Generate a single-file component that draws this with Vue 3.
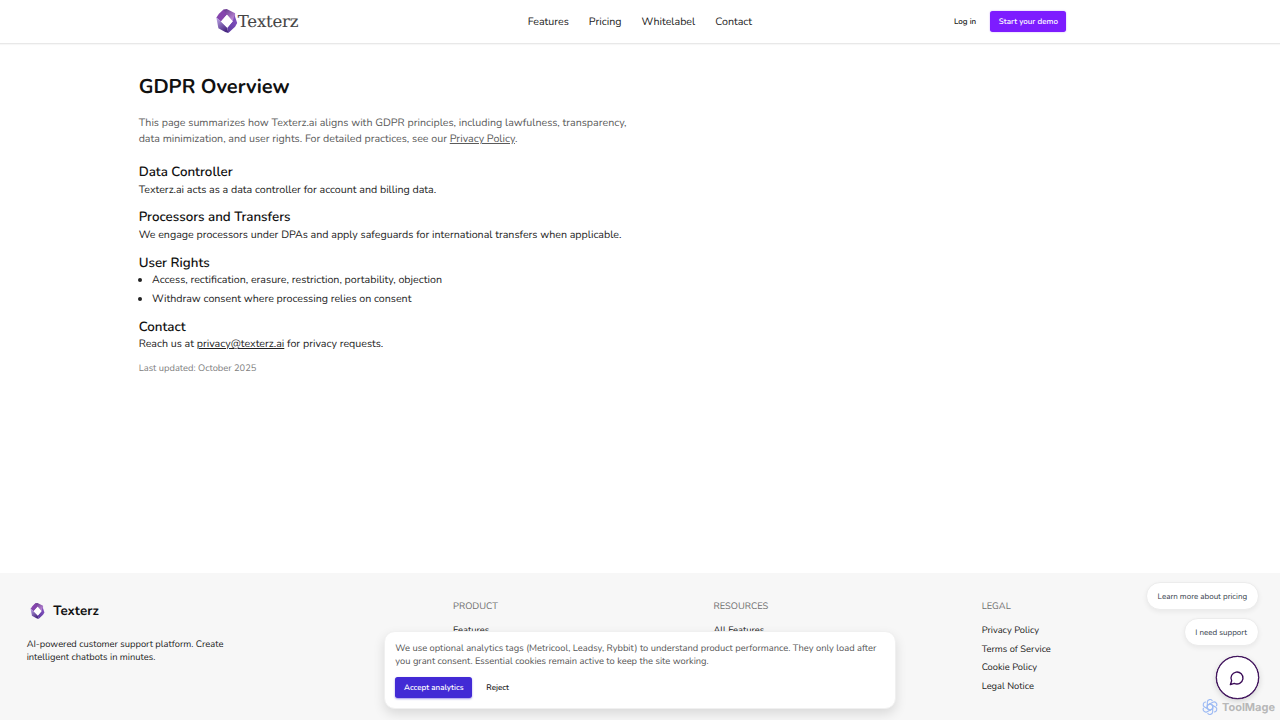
<template>
  <div class="page">
    <header class="navbar">
      <a class="brand">
        <svg class="brand-mark" viewBox="0 0 40 46">
          <defs>
            <linearGradient id="gemTop" x1="0" y1="0" x2="1" y2="1">
              <stop offset="0" stop-color="#54267e" />
              <stop offset="1" stop-color="#cf9be6" />
            </linearGradient>
            <linearGradient id="gemSide" x1="0" y1="0" x2="0.6" y2="1">
              <stop offset="0" stop-color="#c3abec" />
              <stop offset="1" stop-color="#47267f" />
            </linearGradient>
            <linearGradient id="gemRight" x1="1" y1="0" x2="0" y2="1">
              <stop offset="0" stop-color="#8a55c4" />
              <stop offset="1" stop-color="#5b3a9e" />
            </linearGradient>
          </defs>
          <path d="M14 1 L20 0 L36 8 L36 15 L31 24 L20 11 L12 17 L8 9 Z" fill="url(#gemTop)" />
          <path d="M14 1 L20 11 L9 24 L0 17 L5 9 Z" fill="#8545ad" />
          <path d="M0 16 L9 24 L21 36 L23 46 L17 44 L4 37 Z" fill="url(#gemSide)" />
          <path d="M35 12 L40 27 L36 34 L23 46 L21 36 L31 24 Z" fill="url(#gemRight)" />
          <path d="M20.5 11 L31.5 23.5 L21 36 L9 24 Z" fill="#fff" />
        </svg>
        <span class="brand-name">Texterz</span>
      </a>
      <nav class="menu">
        <a v-for="item in menu" :key="item">{{ item }}</a>
      </nav>
      <div class="actions">
        <button class="btn btn-ghost">Log in</button>
        <button class="btn btn-demo">Start your demo</button>
      </div>
    </header>

    <main class="content">
      <h1>GDPR Overview</h1>
      <p class="intro">
        This page summarizes how Texterz.ai aligns with GDPR principles, including lawfulness, transparency,<br />
        data minimization, and user rights. For detailed practices, see our <a>Privacy Policy</a>.
      </p>
      <section>
        <h2>Data Controller</h2>
        <p>Texterz.ai acts as a data controller for account and billing data.</p>
      </section>
      <section>
        <h2>Processors and Transfers</h2>
        <p>We engage processors under DPAs and apply safeguards for international transfers when applicable.</p>
      </section>
      <section>
        <h2>User Rights</h2>
        <ul>
          <li v-for="right in rights" :key="right">{{ right }}</li>
        </ul>
      </section>
      <section>
        <h2>Contact</h2>
        <p>Reach us at <a>privacy@texterz.ai</a> for privacy requests.</p>
      </section>
      <p class="updated">Last updated: October 2025</p>
    </main>

    <footer class="footer">
      <aside>
        <div class="footer-brand">
          <svg class="footer-mark" viewBox="0 0 40 46">
            <path d="M14 1 L20 0 L36 8 L36 15 L31 24 L20 11 L12 17 L8 9 Z" fill="url(#gemTop)" />
            <path d="M14 1 L20 11 L9 24 L0 17 L5 9 Z" fill="#8545ad" />
            <path d="M0 16 L9 24 L21 36 L23 46 L17 44 L4 37 Z" fill="url(#gemSide)" />
            <path d="M35 12 L40 27 L36 34 L23 46 L21 36 L31 24 Z" fill="url(#gemRight)" />
            <path d="M20.5 11 L31.5 23.5 L21 36 L9 24 Z" fill="#fff" />
          </svg>
          <span>Texterz</span>
        </div>
        <p>AI-powered customer support platform. Create<br />intelligent chatbots in minutes.</p>
      </aside>
      <nav v-for="group in footerGroups" :key="group.title">
        <h6>{{ group.title }}</h6>
        <a v-for="link in group.links" :key="link">{{ link }}</a>
      </nav>
    </footer>

    <div class="cookie">
      <p>
        We use optional analytics tags (Metricool, Leadsy, Rybbit) to understand product performance. They only load after<br />
        you grant consent. Essential cookies remain active to keep the site working.
      </p>
      <div class="cookie-actions">
        <button class="btn btn-accept">Accept analytics</button>
        <button class="btn btn-reject">Reject</button>
      </div>
    </div>

    <div class="chat">
      <button v-for="reply in replies" :key="reply" class="reply">{{ reply }}</button>
      <button class="chat-toggle">
        <svg viewBox="0 0 24 24" fill="none" stroke="#3a0b57" stroke-width="2" stroke-linecap="round" stroke-linejoin="round">
          <path d="M7.9 20A9 9 0 1 0 4 16.1L2 22Z" />
        </svg>
      </button>
    </div>

    <div class="watermark">
      <svg viewBox="0 0 24 24" fill="none" stroke="#7ea6f4" stroke-width="1.7">
        <path
          v-for="turn in 6"
          :key="turn"
          d="M12 7.2 L8 9.5 V4.8 A4 4 0 0 1 15.6 3.1 M12 7.2 L16.2 9.6"
          :transform="`rotate(${turn * 60} 12 12)`"
        />
      </svg>
      <span>ToolMage</span>
    </div>
  </div>
</template>

<script setup>
const menu = ['Features', 'Pricing', 'Whitelabel', 'Contact'];

const rights = [
  'Access, rectification, erasure, restriction, portability, objection',
  'Withdraw consent where processing relies on consent'
];

const footerGroups = [
  { title: 'PRODUCT', links: ['Features'] },
  { title: 'RESOURCES', links: ['All Features'] },
  { title: 'LEGAL', links: ['Privacy Policy', 'Terms of Service', 'Cookie Policy', 'Legal Notice'] }
];

const replies = ['Learn more about pricing', 'I need support'];
</script>

<style>
html,
body {
  background: #fff;
  overflow: hidden;
}
</style>

<style scoped>
.page {
  position: relative;
  display: flex;
  flex-direction: column;
  width: 1280px;
  height: 720px;
  overflow: hidden;
  box-sizing: border-box;
  font-family: Nunito, "Open Sans", sans-serif;
  font-size: 10.67px;
  line-height: 16px;
  text-rendering: geometricPrecision;
  color: #222;
  white-space: nowrap;
}

h1,
h2,
h6,
p,
ul {
  margin: 0;
  padding: 0;
}

.navbar {
  display: grid;
  grid-template-columns: 1fr auto 1fr;
  align-items: center;
  height: 42.67px;
  flex: none;
  padding: 0 213.67px 0 213.33px;
  border-bottom: 1px solid #e8e8e8;
  box-shadow: 0 1px 1px rgba(0, 0, 0, 0.03);
}

.brand {
  display: flex;
  align-items: center;
  padding-left: 3px;
}

.brand-mark {
  width: 21.5px;
  height: 24px;
}

.brand-name {
  padding-top: 1px;
  font-family: "DejaVu Serif", serif;
  font-size: 16.5px;
  letter-spacing: -0.2px;
  -webkit-text-stroke: 0.1px #454545;
  color: #454545;
}

.menu {
  display: flex;
  gap: 20px;
  padding-top: 1.2px;
}

.actions {
  display: flex;
  justify-content: flex-end;
  align-items: center;
  gap: 5.5px;
}

.btn {
  height: 21.33px;
  padding: 0 8.67px;
  border: 0;
  border-radius: 2.67px;
  background: none;
  font-family: inherit;
  font-size: 8px;
  font-weight: 600;
  text-rendering: inherit;
  color: #222;
}

.btn-demo {
  width: 76px;
  padding: 0;
  background: #7d1cff;
  color: #fff;
  box-shadow: 0 0 1.5px rgba(125, 28, 255, 0.5);
}

.content {
  display: flex;
  flex-direction: column;
  gap: 10.67px;
  padding: 31.3px 138.67px 0;
}

h1 {
  margin-bottom: 3.33px;
  font-size: 20px;
  line-height: 26px;
  font-weight: 700;
  color: #111;
}

h2 {
  font-size: 13.33px;
  line-height: 18.67px;
  font-weight: 600;
  color: #111;
}

.intro {
  margin-bottom: 5.33px;
  color: #5a5a5a;
}

.content a {
  text-decoration: underline;
}

ul {
  padding-left: 13.33px;
}

li + li {
  margin-top: 2.67px;
}

.updated {
  padding-top: 0.6px;
  font-size: 9.33px;
  line-height: 13.33px;
  color: #808080;
}

.footer {
  display: grid;
  grid-template-columns: 426.4px 260.4px 268.2px auto;
  height: 146.67px;
  margin-top: auto;
  padding: 27.4px 26.67px 0;
  box-sizing: border-box;
  background: #f7f7f7;
  font-size: 9.33px;
  line-height: 13.33px;
}

.footer-brand {
  display: flex;
  align-items: center;
  gap: 8.5px;
  height: 21.33px;
  margin-bottom: 16.5px;
  padding-left: 3px;
  font-size: 13.33px;
  font-weight: 700;
  color: #111;
}

.footer-mark {
  width: 15px;
  height: 16px;
  margin-bottom: 1px;
}

.footer nav {
  display: flex;
  flex-direction: column;
  gap: 5.33px;
}

.footer h6 {
  margin-bottom: 5.6px;
  font-size: 9.33px;
  font-weight: 400;
  color: #6f6f6f;
}

.cookie {
  position: absolute;
  left: 384px;
  bottom: 10.67px;
  width: 512px;
  height: 78.67px;
  box-sizing: border-box;
  padding: 11.2px 10.67px 0 10.33px;
  border: 0.67px solid #f0f0f0;
  border-radius: 10.67px;
  background: #fff;
  box-shadow: 0 5px 12px rgba(0, 0, 0, 0.12);
  font-size: 9.33px;
  line-height: 13.33px;
  color: #555;
}

.cookie-actions {
  display: flex;
  gap: 5.33px;
  margin-top: 7.4px;
}

.btn-accept {
  width: 77px;
  padding: 0;
  background: #422ad5;
  color: #fff;
  box-shadow: 0 1px 2px rgba(66, 42, 213, 0.5);
}

.chat {
  position: absolute;
  right: 21.5px;
  bottom: 21px;
  display: flex;
  flex-direction: column;
  align-items: flex-end;
  gap: 8px;
}

.reply {
  height: 28px;
  padding: 0 10.33px;
  border: 0.67px solid #ececec;
  border-radius: 14px;
  background: #fff;
  box-shadow: 0 2px 5px rgba(0, 0, 0, 0.06);
  font-family: inherit;
  font-size: 8px;
  text-rendering: inherit;
  color: #333b48;
}

.chat-toggle {
  display: flex;
  align-items: center;
  justify-content: center;
  width: 43px;
  height: 43px;
  margin-top: 2px;
  padding: 0;
  border: 1.6px solid #3a0b57;
  border-radius: 50%;
  background: #fff;
  box-shadow: 0 0 0 0.3px #3a0b57, 0 2px 6px rgba(0, 0, 0, 0.16);
}

.chat-toggle svg {
  width: 16px;
  height: 16px;
}

.watermark {
  position: absolute;
  right: 5px;
  bottom: 5px;
  display: flex;
  align-items: center;
  gap: 4px;
  font-family: Inter, sans-serif;
  font-size: 11px;
  font-weight: 700;
  color: #b8b8b8;
}

.watermark svg {
  width: 16px;
  height: 16px;
  opacity: 0.75;
}
</style>
